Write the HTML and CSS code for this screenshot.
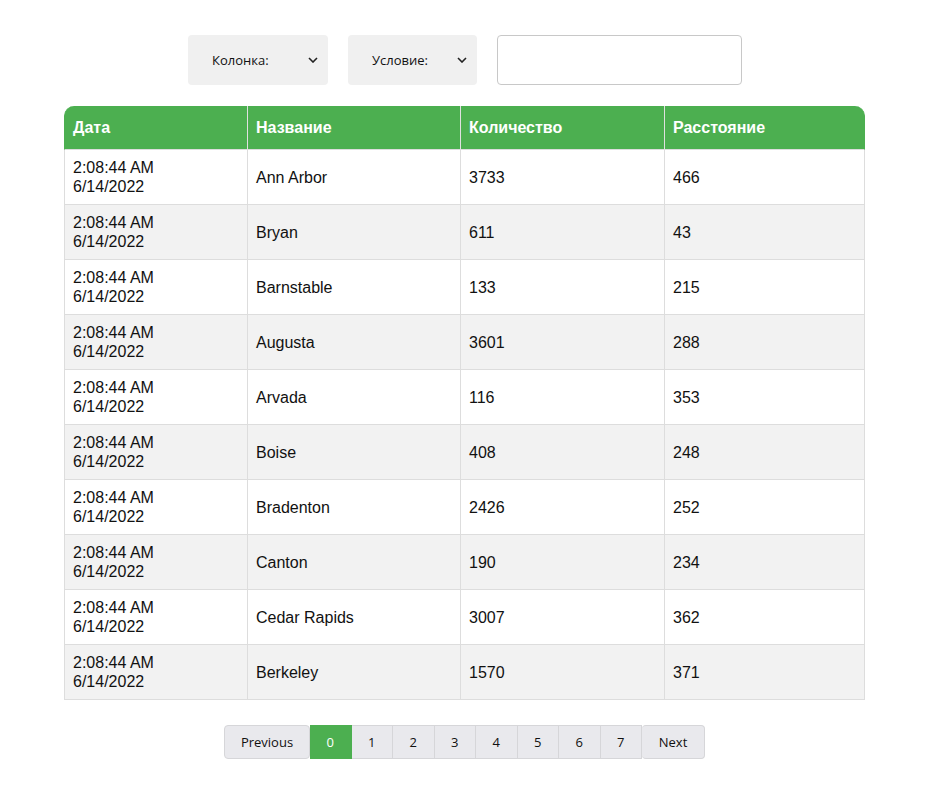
FILE: index.html
```html
<!DOCTYPE html>
<html lang="ru">
<head>
<meta charset="utf-8">
<title>Table</title>
<link rel="stylesheet" href="styles.css">
</head>
<body>
<div class="page">
  <div class="filters">
    <div class="select select-col">
      <span>Колонка:</span>
      <svg class="chev" width="10" height="6" viewBox="0 0 10 6"><path d="M1 1l4 4 4-4" fill="none" stroke="#222" stroke-width="1.6"/></svg>
    </div>
    <div class="select select-cond">
      <span>Условие:</span>
      <svg class="chev" width="10" height="6" viewBox="0 0 10 6"><path d="M1 1l4 4 4-4" fill="none" stroke="#222" stroke-width="1.6"/></svg>
    </div>
    <input class="search" type="text">
  </div>

  <table class="grid">
    <colgroup>
      <col class="c1"><col class="c2"><col class="c3"><col class="c4">
    </colgroup>
    <thead>
      <tr><th>Дата</th><th>Название</th><th>Количество</th><th>Расстояние</th></tr>
    </thead>
    <tbody>
      <tr><td>2:08:44 AM<br>6/14/2022</td><td>Ann Arbor</td><td>3733</td><td>466</td></tr>
      <tr><td>2:08:44 AM<br>6/14/2022</td><td>Bryan</td><td>611</td><td>43</td></tr>
      <tr><td>2:08:44 AM<br>6/14/2022</td><td>Barnstable</td><td>133</td><td>215</td></tr>
      <tr><td>2:08:44 AM<br>6/14/2022</td><td>Augusta</td><td>3601</td><td>288</td></tr>
      <tr><td>2:08:44 AM<br>6/14/2022</td><td>Arvada</td><td>116</td><td>353</td></tr>
      <tr><td>2:08:44 AM<br>6/14/2022</td><td>Boise</td><td>408</td><td>248</td></tr>
      <tr><td>2:08:44 AM<br>6/14/2022</td><td>Bradenton</td><td>2426</td><td>252</td></tr>
      <tr><td>2:08:44 AM<br>6/14/2022</td><td>Canton</td><td>190</td><td>234</td></tr>
      <tr><td>2:08:44 AM<br>6/14/2022</td><td>Cedar Rapids</td><td>3007</td><td>362</td></tr>
      <tr><td>2:08:44 AM<br>6/14/2022</td><td>Berkeley</td><td>1570</td><td>371</td></tr>
    </tbody>
  </table>

  <div class="pager">
    <button class="pbtn prev">Previous</button>
    <button class="pbtn num active">0</button>
    <button class="pbtn num">1</button>
    <button class="pbtn num">2</button>
    <button class="pbtn num">3</button>
    <button class="pbtn num">4</button>
    <button class="pbtn num">5</button>
    <button class="pbtn num">6</button>
    <button class="pbtn num">7</button>
    <button class="pbtn next">Next</button>
  </div>
</div>
</body>
</html>
```

FILE: styles.css
```css
html, body {
  margin: 0;
  padding: 0;
  background: #ffffff;
}

.page {
  width: 801px;
  margin-left: 64px;
  padding-top: 35px;
}

.filters {
  display: flex;
  justify-content: center;
  gap: 20px;
  height: 50px;
  padding-left: 1px;
}

.select {
  display: flex;
  align-items: center;
  justify-content: space-between;
  box-sizing: border-box;
  height: 50px;
  background: #f0f0f0;
  border-radius: 4px;
  font-family: "Open Sans", "Noto Sans", sans-serif;
  font-size: 13px;
  color: #111;
  padding: 0 10px 0 24px;
}

.select-col { width: 140px; }
.select-cond { width: 129px; }

.chev { display: block; }

.search {
  box-sizing: border-box;
  width: 245px;
  height: 50px;
  margin: 0;
  border: 1px solid #c8c8c8;
  border-radius: 4px;
  background: #fff;
}

.grid {
  margin-top: 21px;
  width: 801px;
  table-layout: fixed;
  border-collapse: separate;
  border-spacing: 0;
  font-family: "Liberation Sans", Arial, sans-serif;
  font-size: 16px;
  color: #111;
}

.c1 { width: 184px; }
.c2 { width: 213px; }
.c3 { width: 204px; }
.c4 { width: 200px; }

.grid th,
.grid td {
  text-align: left;
  border-right: 1px solid #dddddd;
  border-bottom: 1px solid #dddddd;
  padding: 8px 8px;
  line-height: 19px;
  vertical-align: middle;
}

.grid th:first-child,
.grid td:first-child {
  border-left: 1px solid #dddddd;
}

.grid th {
  background: #4caf50;
  color: #ffffff;
  font-weight: bold;
  padding: 12px 8px 12px 8px;
  border-bottom: 1px solid #dddddd;
  border-right-color: #e0e0e0;
}

.grid th:first-child {
  border-left-color: #4caf50;
  border-top-left-radius: 10px;
}

.grid th:last-child {
  border-right-color: #4caf50;
  border-top-right-radius: 10px;
}

.grid td {
  height: 38px;
}

.grid tbody tr:nth-child(even) td {
  background: #f2f2f2;
}

.pager {
  display: flex;
  justify-content: center;
  margin-top: 25px;
}

.pbtn {
  box-sizing: border-box;
  height: 34px;
  margin: 0;
  border: 1px solid #d6d6d9;
  border-radius: 4px;
  background: #e9e9ed;
  color: #111;
  font-family: "Open Sans", "Noto Sans", sans-serif;
  font-size: 13px;
  padding: 0;
}

.pbtn.num {
  width: 41.5px;
  border-radius: 0;
  border-left: none;
}

.pbtn.prev { width: 86px; }
.pbtn.next { width: 63px; border-left: none; }

.pbtn.active {
  background: #4caf50;
  border-color: #4caf50;
  color: #fff;
}
```
